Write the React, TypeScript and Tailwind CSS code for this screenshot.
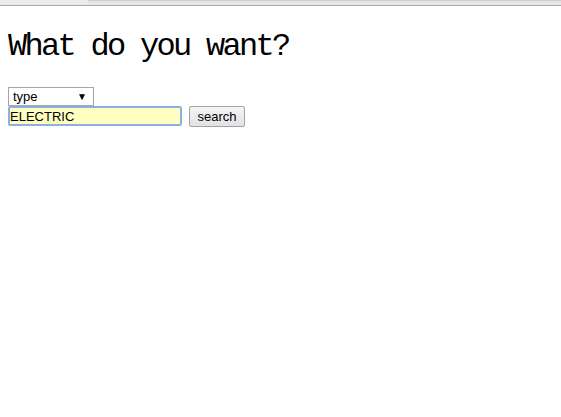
export default function App() {
  return (
    <div className="min-h-[417px] w-full bg-white font-['Liberation_Sans',Arial,sans-serif] text-black">
      {/* browser strip at the top */}
      <div className="flex h-[6px] border-b border-[#a9a9a9]">
        <div className="w-[88px] bg-[#ebebeb]" />
        <div className="flex-1 border-t border-[#cfcfcf] bg-[#e6e6e6]" />
      </div>

      <div className="px-2">
        <h1 className="mt-[23px] mb-[22px] h-[36px] font-['Liberation_Mono',monospace] text-[32px] leading-[36px] tracking-[-2.7px]">
          What do you want?
        </h1>

        <div className="flex w-[86px] h-[19px] items-center justify-between border border-[#a6a6a6] bg-white pl-[4px] pr-[6px] text-[13px] leading-none">
          <span>type</span>
          <span className="text-[10px]">▼</span>
        </div>

        <div className="flex items-start gap-[7px]">
          <input
            className="h-[20px] w-[174px] rounded-[2px] border-2 border-[#8cb0e2] bg-[#ffffc2] px-0 text-[13px] leading-none text-black outline-none"
            defaultValue="ELECTRIC"
          />
          <button className="h-[21px] w-[56px] rounded-[2px] border border-[#a3a3a3] bg-gradient-to-b from-[#f5f5f5] to-[#e2e2e2] text-[13px] leading-none text-black">
            search
          </button>
        </div>
      </div>
    </div>
  )
}
